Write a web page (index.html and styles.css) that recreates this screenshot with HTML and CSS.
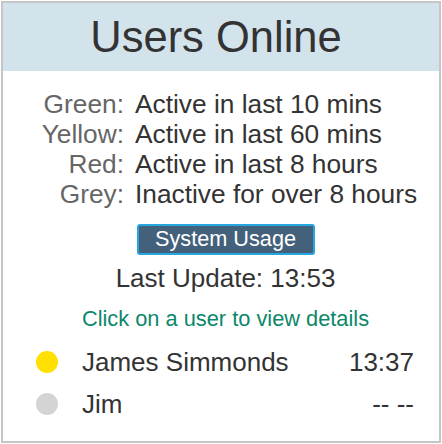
FILE: index.html
```html
<!DOCTYPE html>
<html>
<head>
<meta charset="utf-8">
<link rel="stylesheet" href="styles.css">
</head>
<body>
<div class="panel">
  <div class="header"><h1 class="title">Users Online</h1></div>
  <div class="legend">
    <span class="key">Green:</span><span class="desc">Active in last 10 mins</span>
    <span class="key">Yellow:</span><span class="desc">Active in last 60 mins</span>
    <span class="key">Red:</span><span class="desc">Active in last 8 hours</span>
    <span class="key">Grey:</span><span class="desc">Inactive for over 8 hours</span>
  </div>
  <div class="center">
    <button class="usage">System Usage</button>
    <div class="update">Last Update: 13:53</div>
    <div class="hint">Click on a user to view details</div>
  </div>
  <ul class="users">
    <li class="user"><span class="dot yellow"></span><span class="name">James Simmonds</span><span class="time">13:37</span></li>
    <li class="user"><span class="dot grey"></span><span class="name">Jim</span><span class="time">-- --</span></li>
  </ul>
</div>
</body>
</html>
```
FILE: styles.css
```css
html, body {
  margin: 0;
  padding: 0;
  background: #ffffff;
}
body {
  font-family: "Liberation Sans", Arial, sans-serif;
  color: #333333;
}
.panel {
  box-sizing: border-box;
  margin: 1px;
  width: 440px;
  height: 442px;
  border: 2px solid #c6c6c6;
}
.header {
  height: 68px;
  background: #d3e3ec;
  display: flex;
  align-items: center;
  justify-content: center;
  padding-right: 10px;
}
.title {
  margin: 0;
  font-size: 43.5px;
  font-weight: normal;
  color: #333333;
  line-height: 50px;
}
.legend {
  margin-top: 18px;
  display: grid;
  grid-template-columns: 121px auto;
  column-gap: 11px;
  font-size: 26.3px;
  line-height: 30px;
}
.key {
  text-align: right;
  color: #666666;
}
.desc {
  color: #333333;
  white-space: nowrap;
}
.center {
  display: flex;
  flex-direction: column;
  align-items: center;
  padding-left: 9px;
}
.usage {
  margin-top: 15px;
  box-sizing: border-box;
  height: 31px;
  width: 178px;
  padding: 0 0 2px;
  border: 2px solid #26a6df;
  border-radius: 3px;
  background: #44617c;
  color: #ffffff;
  font-family: "Liberation Sans", Arial, sans-serif;
  font-size: 21.7px;
  line-height: 25px;
}
.update {
  margin-top: 8px;
  font-size: 26px;
  line-height: 30px;
}
.hint {
  margin-top: 11px;
  font-size: 21.8px;
  line-height: 30px;
  color: #0b876a;
}
.users {
  list-style: none;
  margin: 7px 0 0;
  padding: 0 25px 0 33px;
}
.user {
  display: flex;
  align-items: center;
  height: 42px;
  font-size: 26px;
  line-height: 42px;
}
.dot {
  width: 22px;
  height: 22px;
  border-radius: 50%;
  margin-right: 24px;
  flex: none;
}
.yellow { background: #ffe000; }
.grey { background: #d4d4d4; }
.name { flex: 1; }
.time { text-align: right; }
```
